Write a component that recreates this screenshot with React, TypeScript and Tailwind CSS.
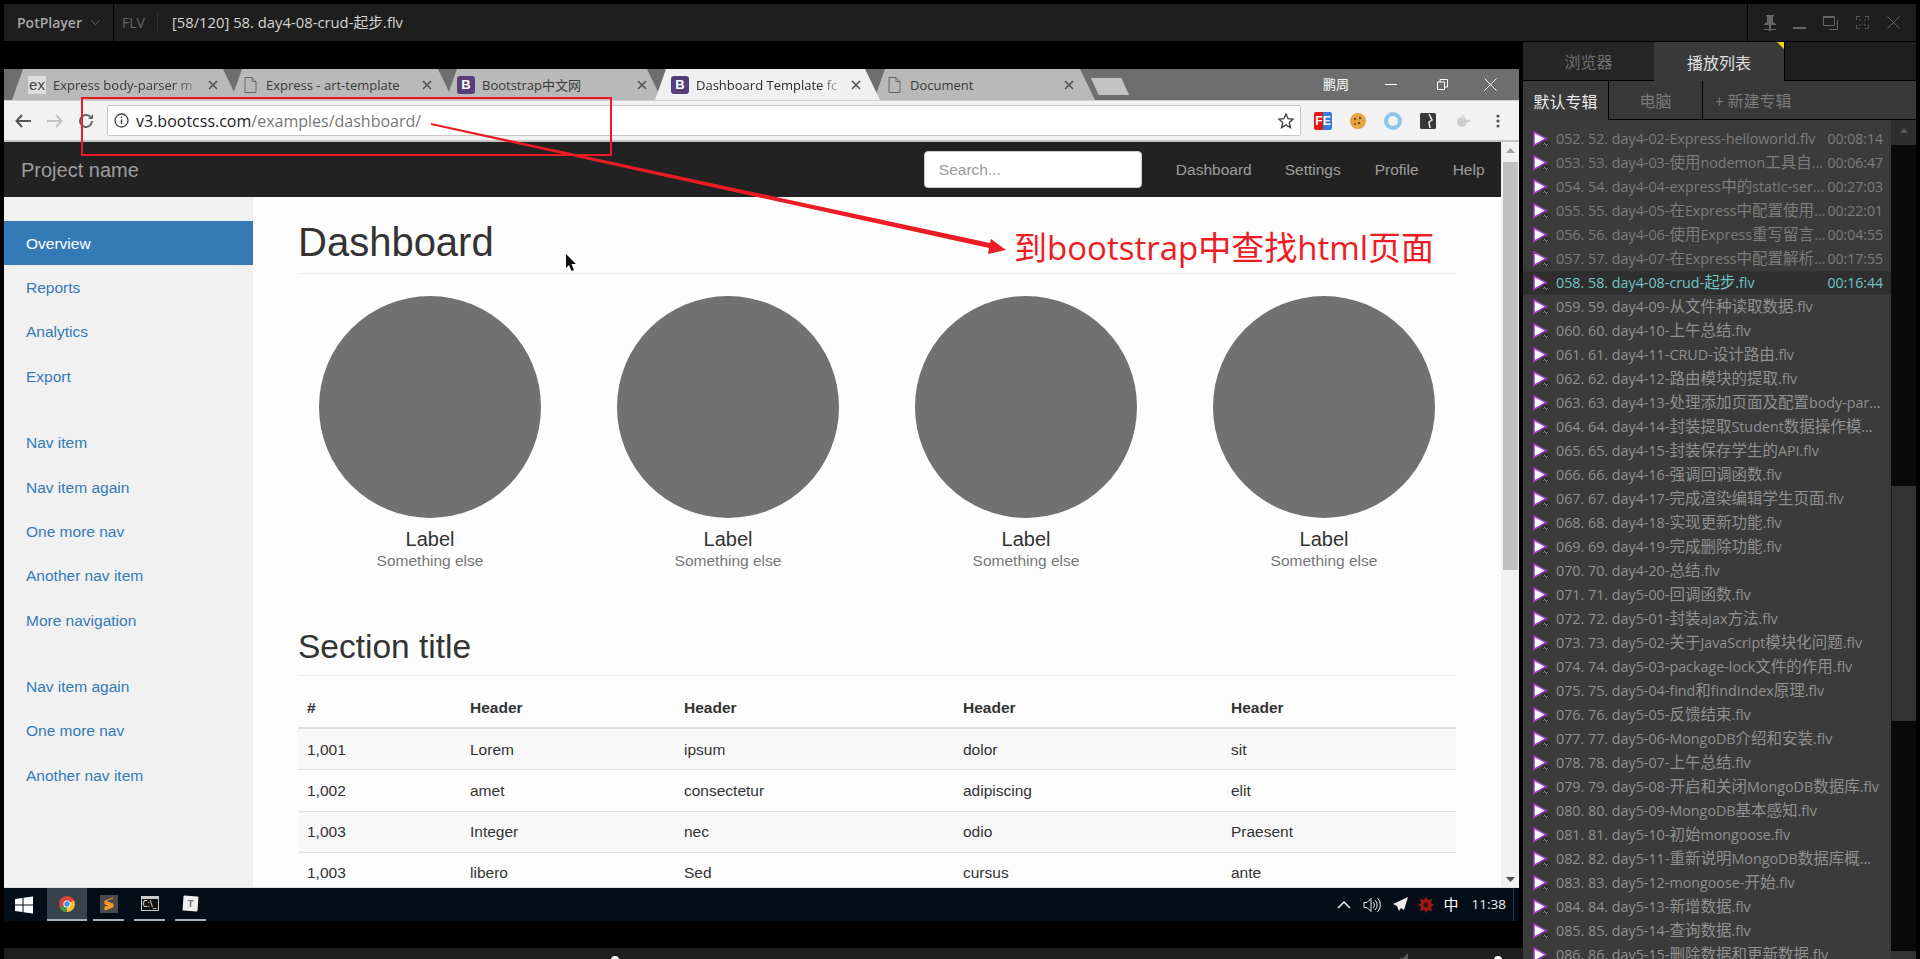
import React from "react";

const ui = "font-['Open_Sans','Noto_Sans_CJK_SC',sans-serif]";
const ar = "font-['Liberation_Sans','Noto_Sans_CJK_SC',sans-serif]";

const rows: [string, string?][] = [
  ["052. 52. day4-02-Express-helloworld.flv", "00:08:14"],
  ["053. 53. day4-03-使用nodemon工具自...", "00:06:47"],
  ["054. 54. day4-04-express中的static-ser...", "00:27:03"],
  ["055. 55. day4-05-在Express中配置使用...", "00:22:01"],
  ["056. 56. day4-06-使用Express重写留言...", "00:04:55"],
  ["057. 57. day4-07-在Express中配置解析...", "00:17:55"],
  ["058. 58. day4-08-crud-起步.flv", "00:16:44"],
  ["059. 59. day4-09-从文件种读取数据.flv"],
  ["060. 60. day4-10-上午总结.flv"],
  ["061. 61. day4-11-CRUD-设计路由.flv"],
  ["062. 62. day4-12-路由模块的提取.flv"],
  ["063. 63. day4-13-处理添加页面及配置body-par..."],
  ["064. 64. day4-14-封装提取Student数据操作模..."],
  ["065. 65. day4-15-封装保存学生的API.flv"],
  ["066. 66. day4-16-强调回调函数.flv"],
  ["067. 67. day4-17-完成渲染编辑学生页面.flv"],
  ["068. 68. day4-18-实现更新功能.flv"],
  ["069. 69. day4-19-完成删除功能.flv"],
  ["070. 70. day4-20-总结.flv"],
  ["071. 71. day5-00-回调函数.flv"],
  ["072. 72. day5-01-封装ajax方法.flv"],
  ["073. 73. day5-02-关于JavaScript模块化问题.flv"],
  ["074. 74. day5-03-package-lock文件的作用.flv"],
  ["075. 75. day5-04-find和findIndex原理.flv"],
  ["076. 76. day5-05-反馈结束.flv"],
  ["077. 77. day5-06-MongoDB介绍和安装.flv"],
  ["078. 78. day5-07-上午总结.flv"],
  ["079. 79. day5-08-开启和关闭MongoDB数据库.flv"],
  ["080. 80. day5-09-MongoDB基本感知.flv"],
  ["081. 81. day5-10-初始mongoose.flv"],
  ["082. 82. day5-11-重新说明MongoDB数据库概..."],
  ["083. 83. day5-12-mongoose-开始.flv"],
  ["084. 84. day5-13-新增数据.flv"],
  ["085. 85. day5-14-查询数据.flv"],
  ["086. 86. day5-15-删除数据和更新数据.flv"],
];

function PlayIcon() {
  return (
    <svg width="17" height="16" viewBox="0 0 17 16" className="shrink-0">
      <polygon points="1,1 13,7.500 1,14.500" fill="#fff" stroke="#a03ad0" strokeWidth="1.500" />
      <rect x="9" y="10.500" width="8" height="5" fill="#2e2e2e" />
      <path d="M10.500 13.500 q1-2 2 0 t2 0" stroke="#ccc" strokeWidth="1" fill="none" />
    </svg>
  );
}

function Mixed({ t }: { t: string }) {
  return (
    <>
      {t.split(/([\u4e00-\u9fff]+)/).map((p, i) =>
        i % 2 === 1 ? <span key={i} className="text-[15.5px] leading-none">{p}</span> : <span key={i}>{p}</span>
      )}
    </>
  );
}

function Tab({ cls, icon, title, active, fade }: { cls: string; icon: React.ReactNode; title: string; active?: boolean; fade?: boolean }) {
  return (
    <div
      className={`${cls} h-full flex items-center shrink-0 [clip-path:polygon(11px_0,calc(100%-15px)_0,100%_100%,0_100%)] ${active ? "relative z-10 bg-[#f0f0f0] text-[#2a2a2a]" : "bg-[#b9b9b9] text-[#3a3a3a]"}`}
    >
      <span className="w-[18px] h-[18px] shrink-0 flex items-center justify-center">{icon}</span>
      <span className={`${ui} ml-[7px] pt-[2px] text-[13px] whitespace-nowrap overflow-hidden flex-1 ${fade ? "[mask-image:linear-gradient(90deg,#000_85%,transparent)]" : ""}`}>{title}</span>
      <svg width="10" height="10" viewBox="0 0 10 10" className="shrink-0 ml-[8px]">
        <path d="M1 1l8 8M9 1l-8 8" stroke="#555" strokeWidth="1.700" />
      </svg>
    </div>
  );
}

const BIcon = () => (
  <span className={`${ar} w-[18px] h-[18px] rounded-[3px] bg-[#563d7c] text-white text-[13px] font-bold flex items-center justify-center`}>B</span>
);
const DocIcon = () => (
  <svg width="13" height="16" viewBox="0 0 13 16">
    <path d="M1 .5h7l4 4v11H1z M8 .5v4h4" fill="none" stroke="#666" />
  </svg>
);

const sideA = ["Reports", "Analytics", "Export"];
const sideB = ["Nav item", "Nav item again", "One more nav", "Another nav item", "More navigation"];
const sideC = ["Nav item again", "One more nav", "Another nav item"];

function SideLink({ t }: { t: string }) {
  return <div className="h-[44.4px] pl-[22px] flex items-center text-[15.5px] text-[#337ab7]">{t}</div>;
}

const tableRows = [
  ["1,001", "Lorem", "ipsum", "dolor", "sit"],
  ["1,002", "amet", "consectetur", "adipiscing", "elit"],
  ["1,003", "Integer", "nec", "odio", "Praesent"],
  ["1,003", "libero", "Sed", "cursus", "ante"],
];
const gridCols = "grid grid-cols-[163px_214px_279px_268px_1fr] px-[9px]";

export default function App() {
  return (
    <div className="relative w-[1920px] h-[959px] overflow-hidden bg-black flex flex-col">
      {/* Title bar */}
      <div className="mt-[4px] ml-[4px] mr-[4px] h-[37px] shrink-0 bg-[#1e1e1e] flex items-center">
        <div className="w-[110px] h-full flex items-center pl-[13px] border-r border-black">
          <span className={`${ui} text-[14px] text-[#a8a8a8] font-semibold`}>PotPlayer</span>
          <svg width="9" height="6" viewBox="0 0 9 6" className="ml-[9px]"><path d="M.5.5l4 4 4-4" stroke="#666" fill="none" /></svg>
        </div>
        <span className={`${ui} ml-[8px] text-[14px] text-[#666]`}>FLV</span>
        <span className="ml-[12px] w-px h-[20px] bg-[#333]" />
        <span className={`${ui} ml-[14px] text-[14.8px] text-[#d5d5d5] whitespace-nowrap`}>[58/120] 58. day4-08-crud-起步.flv</span>
        <div className="ml-auto w-[169px] h-full border-l border-black flex items-center">
          <svg width="14" height="17" viewBox="0 0 14 17" className="ml-[15px]"><path d="M3 1h8v1l-1 1v5l3 2v1H1v-1l3-2V3L3 2zM6 11h2v6H6zM1 15h12v1H1z" fill="#666" /></svg>
          <span className="ml-[16px] mt-[11px] w-[13px] h-[2px] bg-[#666]" />
          <svg width="16" height="15" viewBox="0 0 16 15" className="ml-[17px]"><path d="M.5 1.500h11v9H.5zM.5 2.500h11M14.500 5v9.500H6" fill="none" stroke="#666" /></svg>
          <svg width="13" height="13" viewBox="0 0 13 13" className="ml-[17px]"><path d="M4 .5H.5V4M9 .5h3.500V4M.5 9v3.500H4M12.500 9v3.500H9M3 3l2 2M10 3L8 5M3 10l2-2M10 10L8 8" fill="none" stroke="#555" /></svg>
          <svg width="13" height="13" viewBox="0 0 13 13" className="ml-[18px]"><path d="M.5.5l12 12M12.500.5l-12 12" stroke="#666" /></svg>
        </div>
      </div>

      <div className="flex flex-1 min-h-0">
        {/* Video area */}
        <div className="w-[1523px] shrink-0 flex flex-col pl-[4px] pr-[4px] pt-[28px]">
          <div className="h-[31px] bg-[#6e6e6e] flex pl-[8px] shrink-0 relative">
            <Tab cls="w-[226px] pl-[16px] pr-[20px]" icon={<span className={`${ar} w-[18px] h-[18px] bg-[#ddd] text-[#444] text-[15px] leading-[18px] text-center`}>ex</span>} title="Express body-parser m" fade />
            <Tab cls="w-[222px] -ml-[7px] pl-[10px] pr-[21px]" icon={<DocIcon />} title="Express - art-template" />
            <Tab cls="w-[216px] -ml-[7px] pl-[11px] pr-[15px]" icon={<BIcon />} title="Bootstrap中文网" />
            <Tab cls="w-[225px] -ml-[7px] pl-[16px] pr-[19px]" icon={<BIcon />} title="Dashboard Template fc" active fade />
            <Tab cls="w-[221px] -ml-[6px] pl-[11px] pr-[21px]" icon={<DocIcon />} title="Document" />
            <div className="-ml-[4px] mt-[9px] w-[38px] h-[17px] bg-[#c2c2c2] [clip-path:polygon(0_0,80%_0,100%_100%,20%_100%)]" />
            <span className={`${ui} absolute left-[1319px] top-[6px] text-[13px] text-white`}>鹏周</span>
            <span className="absolute left-[1381px] top-[15px] w-[12px] h-px bg-white" />
            <svg width="11" height="11" viewBox="0 0 11 11" className="absolute left-[1433px] top-[10px]"><path d="M.5 3h7v7.500h-7zM3 3V.500h7.500V8H8" fill="none" stroke="#fff" /></svg>
            <svg width="13" height="13" viewBox="0 0 13 13" className="absolute left-[1480px] top-[9px]"><path d="M.5.5l12 12M12.500.5l-12 12" stroke="#fff" /></svg>
          </div>
          {/* Toolbar */}
          <div className="h-[42px] shrink-0 bg-[#f2f2f2] border-t border-[#d0d0d0] border-b-2 border-b-[#c4c4c4] flex items-center">
            <svg width="16" height="14" viewBox="0 0 16 14" className="ml-[11px]"><path d="M7 1L1.500 7 7 13M1.500 7H16" stroke="#555" strokeWidth="2" fill="none" /></svg>
            <svg width="16" height="14" viewBox="0 0 16 14" className="ml-[16px]"><path d="M9 1l5.500 6L9 13M14.500 7H0" stroke="#c4c4c4" strokeWidth="2" fill="none" /></svg>
            <svg width="16" height="16" viewBox="0 0 16 16" className="ml-[15px]"><path d="M14 8a6 6 0 1 1-1.800-4.300" stroke="#666" strokeWidth="2" fill="none" /><path d="M15 1v5h-5z" fill="#666" /></svg>
            <div className="ml-[13px] w-[1194px] h-[31px] bg-white border border-[#c6c6c6] rounded-[2px] flex items-center">
              <svg width="15" height="15" viewBox="0 0 15 15" className="ml-[6px]"><circle cx="7.500" cy="7.500" r="6.500" fill="none" stroke="#444" strokeWidth="1.300" /><path d="M7.500 6.500v4.500M7.500 3.500v1.500" stroke="#444" strokeWidth="1.500" /></svg>
              <span className={`${ui} ml-[7px] text-[16px] text-[#222] whitespace-nowrap`}>v3.bootcss.com<span className="text-[#777]">/examples/dashboard/</span></span>
              <svg width="16" height="16" viewBox="0 0 16 16" className="ml-auto mr-[6px]"><path d="M8 1l2.100 4.700 5 .5-3.800 3.300 1.100 5L8 11.900 3.600 14.500l1.100-5L.9 6.200l5-.5z" fill="none" stroke="#444" strokeWidth="1.400" /></svg>
            </div>
            <span className={`${ar} ml-[13px] w-[18px] h-[18px] rounded-[2px] bg-[linear-gradient(90deg,#e8170f_50%,#2f7ee0_50%)] text-white text-[12px] font-bold leading-[18px] text-center`}>FE</span>
            <svg width="16" height="16" viewBox="0 0 16 16" className="ml-[18px]"><circle cx="8" cy="8" r="8" fill="#e6a545" /><circle cx="5" cy="6" r="1.200" fill="#7a4a1a" /><circle cx="10" cy="5" r="1.200" fill="#7a4a1a" /><circle cx="9" cy="10" r="1.200" fill="#7a4a1a" /><circle cx="5" cy="11" r="1" fill="#7a4a1a" /></svg>
            <svg width="18" height="18" viewBox="0 0 18 18" className="ml-[18px]"><circle cx="9" cy="9" r="7" fill="none" stroke="#8cc4ea" strokeWidth="4" /></svg>
            <svg width="16" height="16" viewBox="0 0 16 16" className="ml-[18px]"><rect width="16" height="16" rx="1.500" fill="#383838" /><path d="M9 1l3 6-3 2 1 6" stroke="#eee" strokeWidth="1.500" fill="none" /></svg>
            <svg width="14" height="14" viewBox="0 0 14 14" className="ml-[20px]"><circle cx="6" cy="8" r="5" fill="#ccc" /><circle cx="7" cy="3" r="2" fill="#ddd" /><path d="M10 7h4" stroke="#ccc" strokeWidth="2" /></svg>
            <svg width="4" height="14" viewBox="0 0 4 14" className="ml-[26px]"><circle cx="2" cy="2" r="1.600" fill="#555" /><circle cx="2" cy="7" r="1.600" fill="#555" /><circle cx="2" cy="12" r="1.600" fill="#555" /></svg>
          </div>
          {/* Page */}
          <div className="h-[746px] shrink-0 flex overflow-hidden border-b border-[#ddd]">
            <div className="w-[1497px] shrink-0 flex flex-col">
              <div className={`${ar} h-[55px] shrink-0 bg-[#222] flex items-center text-[#9d9d9d]`}>
                <span className="ml-[17px] text-[20px]">Project name</span>
                <div className="ml-[785px] w-[218px] h-[37px] bg-white rounded-[4px] border border-[#ccc] pl-[14px] flex items-center text-[15.5px] text-[#999]">Search...</div>
                <span className="ml-[34px] text-[15.5px]">Dashboard</span>
                <span className="ml-[33px] text-[15.5px]">Settings</span>
                <span className="ml-[34px] text-[15.5px]">Profile</span>
                <span className="ml-[34px] text-[15.5px]">Help</span>
              </div>
              <div className={`${ar} flex flex-1 min-h-0`}>
                <div className="w-[249px] shrink-0 bg-[#f1f1f1] pt-[24px]">
                  <div className="h-[44.4px] pl-[22px] flex items-center text-[15.5px] text-white bg-[#337ab7]">Overview</div>
                  {sideA.map((t) => <SideLink key={t} t={t} />)}
                  <div className="h-[22px]" />
                  {sideB.map((t) => <SideLink key={t} t={t} />)}
                  <div className="h-[22px]" />
                  {sideC.map((t) => <SideLink key={t} t={t} />)}
                </div>
                <div className="flex-1 min-w-0 bg-[#fdfdfd] pl-[45px] pr-[45px] pt-[23px]">
                  <div className="text-[40px] leading-[44px] text-[#333] pb-[9px] border-b border-[#eee]">Dashboard</div>
                  <div className="-mx-[17px] mt-[22px] grid grid-cols-4">
                    {[0, 1, 2, 3].map((i) => (
                      <div key={i} className="flex flex-col items-center">
                        <div className="w-[222px] h-[222px] rounded-full bg-[#717171]" />
                        <div className="mt-[9px] text-[20px] leading-[24px] text-[#333]">Label</div>
                        <div className="-mt-px text-[15.5px] leading-[22px] text-[#777]">Something else</div>
                      </div>
                    ))}
                  </div>
                  <div className="mt-[57px] text-[33.5px] leading-[36px] text-[#333] pb-[10px] border-b border-[#eee]">Section title</div>
                  <div className={`${gridCols} h-[53px] items-end pb-[8px] border-b-2 border-[#ddd] text-[15.5px] leading-[22px] font-bold text-[#333]`}>
                    {["#", "Header", "Header", "Header", "Header"].map((h, i) => <span key={i}>{h}</span>)}
                  </div>
                  {tableRows.map((r, i) => (
                    <div key={i} className={`${gridCols} h-[41.300px] items-center border-b border-[#ddd] text-[15.5px] text-[#333] ${i % 2 === 0 ? "bg-[#f8f8f8]" : ""}`}>
                      {r.map((c, j) => <span key={j}>{c}</span>)}
                    </div>
                  ))}
                </div>
              </div>
            </div>
            {/* Page scrollbar */}
            <div className="flex-1 bg-[#f1f1f1] flex flex-col items-center pt-[6px]">
              <svg width="9" height="5" viewBox="0 0 9 5"><polygon points="4.500,0 9,5 0,5" fill="#a0a0a0" /></svg>
              <div className="mt-[9px] w-[15px] h-[408px] bg-[#c1c1c1]" />
              <svg width="9" height="5" viewBox="0 0 9 5" className="mt-auto mb-[5px]"><polygon points="0,0 9,0 4.500,5" fill="#505050" /></svg>
            </div>
          </div>
          {/* Taskbar */}
          <div className="h-[33px] shrink-0 bg-[#020d17] flex items-start">
            <svg width="18" height="18" viewBox="0 0 18 18" className="ml-[11px] mt-[8px]"><path d="M0 3l7.500-1.100V8.500H0zM8.500 1.800L18 .5v8H8.500zM0 9.500h7.500v6.600L0 15zM8.500 9.500H18v8l-9.500-1.300z" fill="#fff" /></svg>
            <div className="ml-[14px] w-[40px] h-full bg-[#36434d] border-b-2 border-[#a6b0b8] flex items-center justify-center">
              <svg width="16" height="16" viewBox="0 0 16 16"><circle cx="8" cy="8" r="8" fill="#d8453a" /><path d="M8 8L1 12a8 8 0 0 0 7 4z" fill="#3da04b" /><path d="M8 8l7-3.500A8 8 0 0 1 8 16z" fill="#f5c22d" /><circle cx="8" cy="8" r="3.600" fill="#fff" /><circle cx="8" cy="8" r="2.700" fill="#4a8ae8" /></svg>
            </div>
            <div className="ml-[6px] w-[31px] h-full border-b-2 border-[#a6b0b8] flex items-center justify-center">
              <svg width="18" height="18" viewBox="0 0 18 18"><rect width="18" height="18" fill="#4a4a4a" /><path d="M13 3L5 6v3l8 3v-3L5 6M13 9l-8 3v3l8-3" fill="#f59a20" stroke="#f59a20" /></svg>
            </div>
            <div className="ml-[10px] w-[31px] h-full border-b-2 border-[#a6b0b8] flex items-center justify-center">
              <div className="w-[18px] h-[15px] bg-[#111] border border-[#ccc] border-t-[3px] text-[8px] leading-[10px] text-white pl-[1px]">C:\_</div>
            </div>
            <div className="ml-[10px] w-[31px] h-full border-b-2 border-[#a6b0b8] flex items-center justify-center">
              <div className={`${ar} w-[15px] h-[15px] bg-[#eee] rotate-[4deg] rounded-[1px] text-[10px] font-bold leading-[15px] text-center text-[#777]`}>T</div>
            </div>
            <div className="ml-auto flex items-center h-full">
              <svg width="14" height="8" viewBox="0 0 14 8"><path d="M1 7l6-6 6 6" stroke="#eee" strokeWidth="1.500" fill="none" /></svg>
              <svg width="19" height="16" viewBox="0 0 19 16" className="ml-[12px]"><path d="M1 5.500h3l4-4v13l-4-4H1zM10 5a4 4 0 0 1 0 6M12 3a7 7 0 0 1 0 10M14.500 1a10 10 0 0 1 0 14" fill="none" stroke="#eee" /></svg>
              <svg width="15" height="15" viewBox="0 0 15 15" className="ml-[11px]"><path d="M15 0L0 7l4 2 2 5 2-3 3 2z" fill="#eee" /></svg>
              <svg width="16" height="16" viewBox="0 0 16 16" className="ml-[10px]"><path d="M8 0l2 3 4-1-1 4 3 2-3 2 1 4-4-1-2 3-2-3-4 1 1-4-3-2 3-2-1-4 4 1z" fill="#a01818" /><circle cx="8" cy="8" r="2.500" fill="#311" /></svg>
              <span className={`${ui} ml-[10px] text-[15px] text-white`}>中</span>
              <span className={`${ui} ml-[13px] text-[13.5px] text-[#eee]`}>11:38</span>
              <span className="ml-[7px] w-[6px] h-full border-l border-[#2c3a46]" />
            </div>
          </div>
          {/* Player control strip */}
          <div className="mt-[27px] flex-1 bg-[#1e1e1e] relative -mr-[4px]">
            <span className="absolute left-[607px] top-[8px] w-[8px] h-[8px] rounded-full bg-white" />
            <span className="absolute left-[1490px] top-[8px] w-[8px] h-[8px] rounded-full bg-white" />
            <svg width="10" height="10" viewBox="0 0 10 10" className="absolute left-[1396px] top-[4px]"><path d="M0 6h3l5-5v9H0z" fill="#555" /></svg>
          </div>
        </div>

        {/* Right panel */}
        <div className="flex-1 min-w-0 mt-[1px] mr-[4px] flex flex-col">
          <div className="h-[39px] shrink-0 flex items-stretch border-black">
            <div className="w-[131px] bg-[#262626] border-b border-black flex items-center justify-center text-[16px] text-[#707070] font-['Noto_Sans_CJK_SC',sans-serif]">浏览器</div>
            <div className="relative w-[131px] bg-[#3a3a3a] border-r border-black flex items-center justify-center text-[16px] text-[#e0e0e0] font-['Noto_Sans_CJK_SC',sans-serif]">
              播放列表
              <span className="absolute right-0 top-0 w-[7px] h-[7px] bg-[#f5d800] [clip-path:polygon(0_0,100%_0,100%_100%)]" />
            </div>
            <div className="flex-1 bg-[#1e1e1e] border-b border-black" />
          </div>
          <div className="h-[39px] shrink-0 flex items-stretch bg-[#383838] font-['Noto_Sans_CJK_SC',sans-serif] text-[16px]">
            <div className="w-[86px] bg-[#3a3a3a] border-r border-black flex items-center justify-center text-[#eaeaea]">默认专辑</div>
            <div className="w-[94px] border-r border-black border-b flex items-center justify-center text-[#7a7a7a]">电脑</div>
            <div className="flex-1 border-b border-black pl-[12px] flex items-center text-[#7a7a7a]">+ 新建专辑</div>
          </div>
          <div className="flex-1 min-h-0 flex">
            <div className="w-[368px] shrink-0 bg-[#3b3b3b] pt-[7px] overflow-hidden">
              {rows.map(([t, d], i) => {
                const cur = i === 6;
                const played = i < 6;
                const color = cur ? "text-[#6fc4c4]" : played ? "text-[#7c7c7c]" : "text-[#909090]";
                return (
                  <div key={i} className={`h-[24px] flex items-center pl-[10px] pr-[8px] border-y ${cur ? "bg-[#2f2f2f] border-[#333]" : "border-transparent"} ${ui} text-[14.3px] leading-[22px] ${color}`}>
                    <PlayIcon />
                    <span className="ml-[6px] whitespace-nowrap flex-1 min-w-0"><Mixed t={t} /></span>
                    {d && <span className="ml-[4px] text-[14px]">{d}</span>}
                  </div>
                );
              })}
            </div>
            <div className="flex-1 bg-[#0a0a0a] flex flex-col">
              <div className="h-[25px] bg-[#2e2e2e] flex items-start justify-center pt-[8px]">
                <svg width="8" height="5" viewBox="0 0 8 5"><polygon points="4,0 8,5 0,5" fill="#555" /></svg>
              </div>
              <div className="mt-[341px] h-[235px] bg-[#333] border-l border-[#222]" />
              <div className="mt-auto h-[8px] bg-[#333]" />
            </div>
          </div>
        </div>
      </div>

      {/* Annotations */}
      <div className="absolute left-[81px] top-[97px] w-[531px] h-[59px] border-2 border-[#ed1c24]" />
      <svg width="1100" height="280" viewBox="0 0 1100 280" className="absolute left-0 top-0 pointer-events-none">
        <polygon points="431,123 990,243 991,239 1006,250 988,254 989,248 431,125" fill="#ed1c24" />
      </svg>
      <div className={`${ui} absolute left-[1014px] top-[226px] text-[33px] leading-[44px] text-[#ed1c24] whitespace-nowrap`}>到bootstrap中查找html页面</div>
      <svg width="12" height="18" viewBox="0 0 12 18" className="absolute left-[565px] top-[254px]"><path d="M1 0v14l3-3 2.500 6 2.500-1-2.500-6H11z" fill="#111" /></svg>
    </div>
  );
}
